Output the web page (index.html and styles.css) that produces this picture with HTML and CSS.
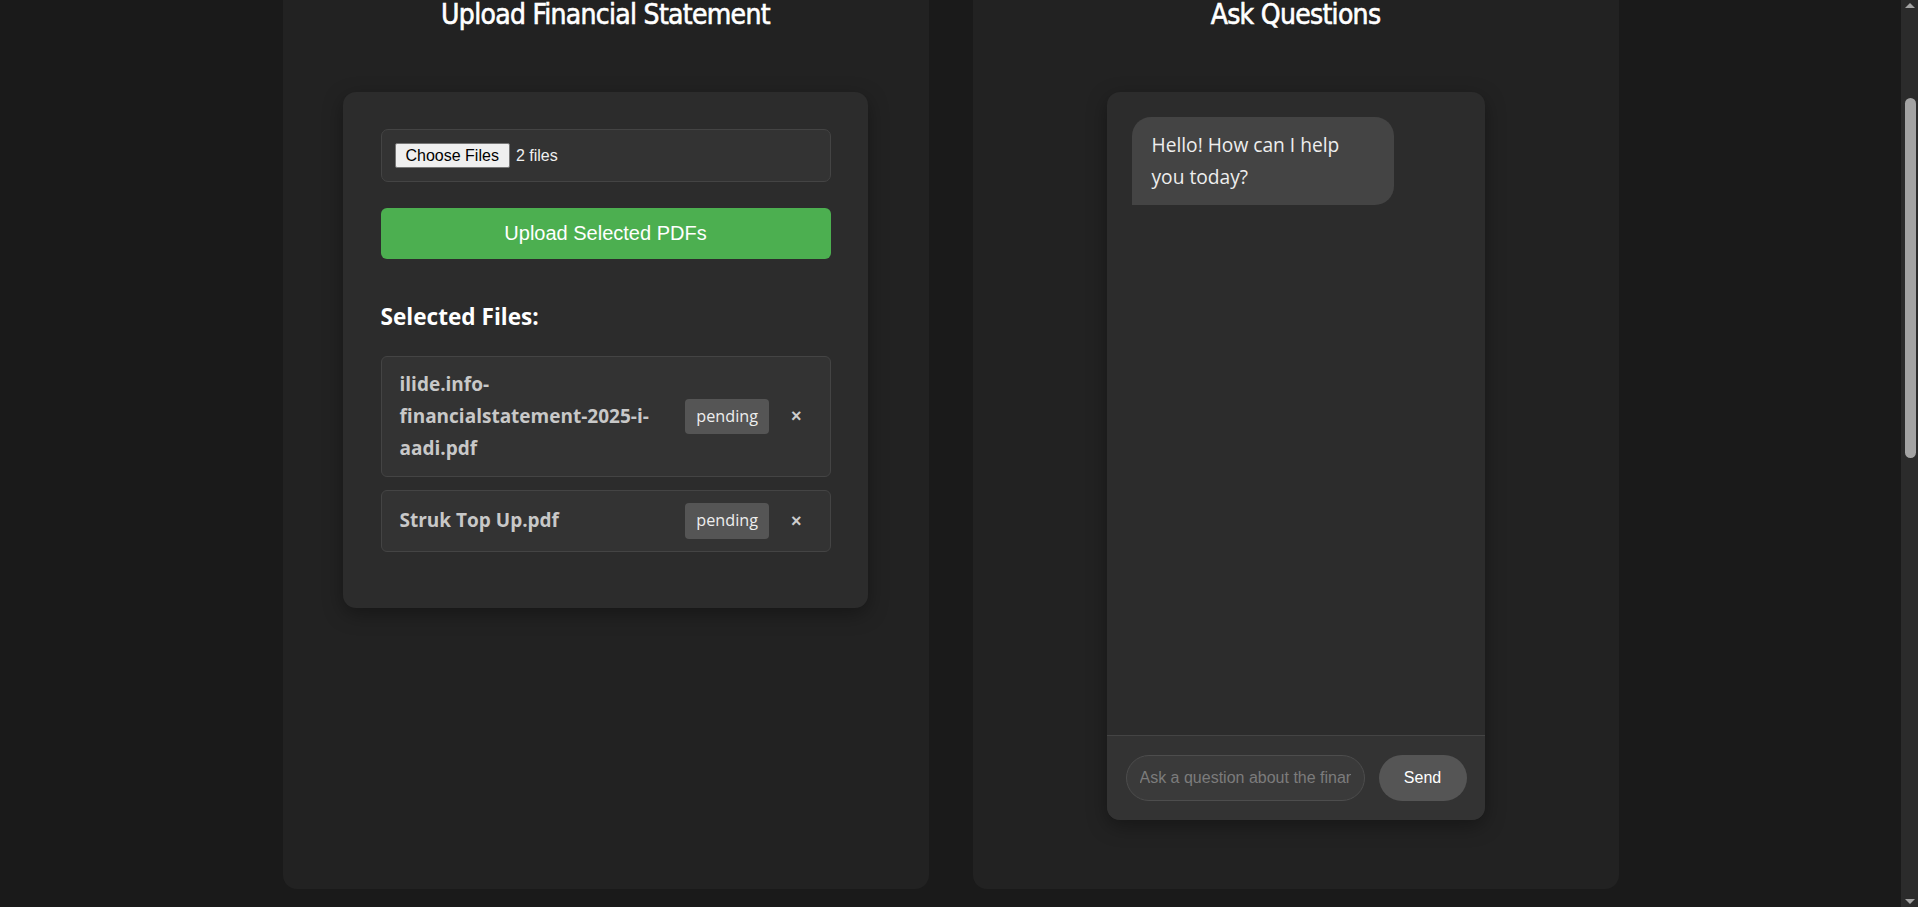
FILE: index.html
```html
<!DOCTYPE html>
<html lang="en">
<head>
<meta charset="utf-8">
<title>Financial Statement Q&amp;A</title>
<link rel="stylesheet" href="styles.css">
</head>
<body>
<main class="container">
  <section class="panel">
    <h2 class="panel-title">Upload Financial Statement</h2>
    <div class="card upload-card">
      <div class="file-field">
        <span class="file-btn">Choose Files</span>
        <span class="file-count">2 files</span>
      </div>
      <button class="upload-btn" type="button">Upload Selected PDFs</button>
      <h3 class="files-heading">Selected Files:</h3>
      <ul class="file-list">
        <li class="file-item">
          <span class="file-name">ilide.info-financialstatement-2025-i-aadi.pdf</span>
          <span class="status">pending</span>
          <button class="remove" type="button">×</button>
        </li>
        <li class="file-item">
          <span class="file-name">Struk Top Up.pdf</span>
          <span class="status">pending</span>
          <button class="remove" type="button">×</button>
        </li>
      </ul>
    </div>
  </section>
  <section class="panel">
    <h2 class="panel-title">Ask Questions</h2>
    <div class="card chat-card">
      <div class="messages">
        <div class="bubble bot">Hello! How can I help you today?</div>
      </div>
      <div class="chat-input">
        <input class="question" type="text" placeholder="Ask a question about the financial statement...">
        <button class="send-btn" type="button">Send</button>
      </div>
    </div>
  </section>
</main>
<aside class="scrollbar" aria-hidden="true">
  <span class="sb-arrow sb-up"></span>
  <span class="sb-thumb"></span>
  <span class="sb-arrow sb-down"></span>
</aside>
<script src="script.js"></script>
</body>
</html>
```

FILE: styles.css
```css
html {
  background: #1a1a1a;
  scrollbar-width: none;
}

body {
  margin: 0;
  padding-right: 17px;
  background: #1a1a1a;
  color: #e0e0e0;
  font-family: "Open Sans", "Noto Sans", sans-serif;
}

/* drawn scrollbar (the page is scrolled part way down) */
.scrollbar {
  position: fixed;
  top: 0;
  right: 0;
  bottom: 0;
  width: 17px;
  background: #2b2b2b;
  display: flex;
  flex-direction: column;
  align-items: center;
}

.sb-arrow {
  width: 0;
  height: 0;
  border-left: 5px solid transparent;
  border-right: 5px solid transparent;
}

.sb-up {
  margin-top: 3px;
  border-bottom: 5px solid #a3a3a3;
}

.sb-down {
  margin-top: auto;
  margin-bottom: 3px;
  border-top: 5px solid #a3a3a3;
}

.sb-thumb {
  width: 11px;
  height: 360px;
  margin-top: 90px;
  margin-left: 2px;
  border-radius: 6px;
  background: #a3a3a3;
}

.container {
  width: 1336px;
  margin: 175px auto 1109px;
  display: flex;
  gap: 44px;
  align-items: stretch;
}

.panel {
  flex: 1;
  background: #222222;
  border-radius: 14px;
  padding: 30px 0 69px;
  display: flex;
  flex-direction: column;
  align-items: center;
}

.panel-title {
  margin: 0 0 59px;
  font-family: "DejaVu Sans Condensed", "DejaVu Sans", sans-serif;
  font-weight: 400;
  font-size: 28px;
  letter-spacing: -0.7px;
  -webkit-text-stroke: 0.6px #ffffff;
  line-height: 36px;
  color: #ffffff;
  text-align: center;
}

.card {
  background: #2c2c2c;
  border-radius: 13px;
  box-shadow: 0 6px 20px rgba(0, 0, 0, 0.35);
  box-sizing: border-box;
}

.upload-card {
  width: 525px;
  padding: 37px 37.5px 37px;
}

.file-field {
  height: 53px;
  box-sizing: border-box;
  display: flex;
  align-items: center;
  padding: 0 13px;
  background: #333333;
  border: 1px solid #444444;
  border-radius: 7px;
  font-family: "Liberation Sans", Arial, sans-serif;
  font-size: 16px;
}

.file-btn {
  background: #efefef;
  color: #000000;
  border: 1px solid #767676;
  border-radius: 2px;
  padding: 2px 10px;
  line-height: 19px;
}

.file-count {
  margin-left: 6px;
  color: #f0f0f0;
}

.upload-btn {
  display: block;
  width: 100%;
  height: 51px;
  margin-top: 26px;
  border: none;
  border-radius: 6px;
  background: #4caf50;
  color: #ffffff;
  font-family: "Liberation Sans", Arial, sans-serif;
  font-size: 20px;
}

.files-heading {
  margin: 43px 0 25px;
  font-size: 22.6px;
  line-height: 29px;
  font-weight: 700;
  color: #ffffff;
}

.file-list {
  list-style: none;
  margin: 0 0 19px;
  padding: 0;
  display: flex;
  flex-direction: column;
  gap: 13px;
}

.file-item {
  display: flex;
  align-items: center;
  padding: 12px 18px;
  background: #333333;
  border: 1px solid #444444;
  border-radius: 6px;
}

.file-name {
  flex: 1;
  font-weight: 700;
  font-size: 19px;
  line-height: 31.8px;
  color: #c8c8c8;
}

.status {
  margin-left: 20px;
  padding: 6px 11px;
  background: #555555;
  color: #eeeeee;
  border-radius: 4px;
  font-size: 16.2px;
  line-height: 23.5px;
}

.remove {
  margin-left: 12px;
  padding: 4px 10px;
  background: none;
  border: none;
  color: #cccccc;
  font-family: "Liberation Sans", Arial, sans-serif;
  font-size: 18px;
  font-weight: 700;
}

.chat-card {
  width: 378px;
  height: 728px;
  display: flex;
  flex-direction: column;
  overflow: hidden;
}

.messages {
  flex: 1;
  padding: 25px;
  display: flex;
  flex-direction: column;
  align-items: flex-start;
}

.bubble {
  max-width: 80%;
  box-sizing: border-box;
  padding: 12px 20px;
  background: #444444;
  color: #eeeeee;
  border-radius: 19px 19px 19px 0;
  font-size: 19.2px;
  line-height: 32px;
}

.chat-input {
  display: flex;
  align-items: center;
  padding: 19px 18px 19px 19px;
  background: #333333;
  border-top: 1px solid #444444;
}

.question {
  flex: 1;
  min-width: 0;
  height: 46px;
  box-sizing: border-box;
  padding: 0 13px;
  background: #3a3a3a;
  border: 1px solid #4d4d4d;
  border-radius: 23px;
  color: #eeeeee;
  font-family: "Liberation Sans", Arial, sans-serif;
  font-size: 16px;
  outline: none;
}

.question::placeholder {
  color: #7c7c7c;
}

.send-btn {
  margin-left: 14px;
  width: 88px;
  height: 46px;
  border: none;
  border-radius: 23px;
  background: #555555;
  color: #ffffff;
  font-family: "Liberation Sans", Arial, sans-serif;
  font-size: 16px;
}
```

FILE: script.js
```js
if ('scrollRestoration' in history) {
  history.scrollRestoration = 'manual';
}
window.scrollTo(0, 208);
window.addEventListener('load', function () {
  window.scrollTo(0, 208);
});
```
